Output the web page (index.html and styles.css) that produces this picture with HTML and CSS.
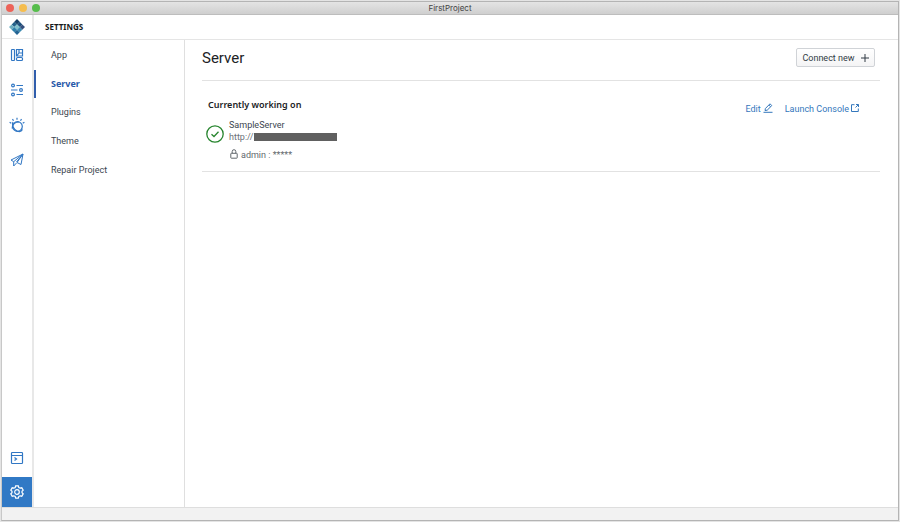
FILE: index.html
```html
<!DOCTYPE html>
<html lang="en">
<head>
<meta charset="utf-8">
<title>FirstProject</title>
<link rel="stylesheet" href="styles.css">
</head>
<body>
<div class="window">
  <header class="titlebar">
    <div class="lights">
      <button class="light close" aria-label="Close"></button>
      <button class="light minimize" aria-label="Minimize"></button>
      <button class="light maximize" aria-label="Maximize"></button>
    </div>
    <span class="window-title">FirstProject</span>
  </header>
  <div class="workspace">
    <nav class="rail" aria-label="Tools">
      <a class="logo" href="#" aria-label="Home">
        <svg width="16" height="16" viewBox="0 0 16 16">
          <path fill="#153f66" d="M8 0l2.7 2.7L8 5.4 5.3 2.7z"/>
          <path fill="#23618a" d="M5.3 2.7L8 5.4 5.3 8 2.7 5.4z"/>
          <path fill="#1d4f7c" d="M10.7 2.7l2.6 2.7L10.7 8 8 5.4z"/>
          <path fill="#6caec1" d="M2.7 5.4L5.3 8l-2.6 2.7L0 8z"/>
          <path fill="#80c2ce" d="M8 5.4L10.7 8 8 10.7 5.3 8z"/>
          <path fill="#344f7c" d="M13.3 5.4L16 8l-2.7 2.7L10.7 8z"/>
          <path fill="#2d7faa" d="M5.3 8L8 10.7l-2.7 2.6-2.6-2.6z"/>
          <path fill="#3c8ab0" d="M10.7 8l2.6 2.7-2.6 2.6L8 10.7z"/>
          <path fill="#236493" d="M8 10.7l2.7 2.6L8 16l-2.7-2.7z"/>
        </svg>
      </a>
      <a class="tool" href="#" aria-label="Views">
        <svg width="14" height="14" viewBox="0 0 14 14">
          <rect x="1.5" y="1.5" width="3" height="11" rx=".7"/>
          <path d="M9 1.500H6.500V8h6V1.500H9v3.500h3.500M9 5L7 7.500"/>
          <rect x="6.5" y="9.5" width="6" height="3" rx="1"/>
        </svg>
      </a>
      <a class="tool" href="#" aria-label="Data">
        <svg width="14" height="14" viewBox="0 0 14 14">
          <circle cx="3" cy="2.5" r="1.4"/><circle cx="11" cy="7" r="1.4"/><circle cx="3" cy="11.5" r="1.4"/>
          <path d="M6.5 2.5H13M1 7h6.5M6.5 11.5H13"/>
        </svg>
      </a>
      <a class="tool" href="#" aria-label="Watson">
        <svg width="16" height="16" viewBox="0 0 16 16">
          <circle cx="8.500" cy="9.500" r="4.800"/>
          <path d="M4 5c-1.300 3 .3 7 4 9 2.300 1 4.500.3 5.500-1.500M3.200 11.500c.3-4 3.300-6.500 6.800-6.500M8 .7v2M3.500 2l1 1.700M12.500 2l-1 1.700M.6 5.200l1.700 1M15.400 5.200l-1.700 1"/>
        </svg>
      </a>
      <a class="tool" href="#" aria-label="Publish">
        <svg class="fine" width="14" height="14" viewBox="0 0 14 14">
          <path d="M13 1L1 7l2.700 1.700L13 1l-2 10.500-4-2zM3.700 8.700V13L6.500 10M13 1L6.500 9"/>
        </svg>
      </a>
      <a class="tool console" href="#" aria-label="Console">
        <svg width="14" height="14" viewBox="0 0 14 14">
          <rect x="1.500" y="1.500" width="11" height="11" rx=".8"/><path d="M1.500 4.500h11M4.500 6.500l2 1.500-2 1.500"/>
        </svg>
      </a>
      <a class="tool current" href="#" aria-label="Settings">
        <svg width="16" height="16" viewBox="0 0 16 16">
          <path d="M6.700 1.800h2.600l.5 1.700 1.300.7 1.700-.4 1.400 2.300-1.200 1.200v1.400l1.200 1.200-1.400 2.300-1.700-.4-1.300.7-.5 1.700H6.700l-.5-1.700-1.300-.7-1.700.4-1.400-2.300L3 8.700V7.300L1.800 6.100l1.400-2.300 1.700.4 1.300-.7z"/>
          <circle cx="8" cy="8" r="2.300"/>
        </svg>
      </a>
    </nav>
    <div class="page">
      <div class="page-header">SETTINGS</div>
      <div class="page-body">
        <nav class="menu" aria-label="Settings">
          <div class="menu-items">
            <a href="#">App</a>
            <a href="#" class="selected">Server</a>
            <a href="#">Plugins</a>
            <a href="#">Theme</a>
            <a href="#">Repair Project</a>
          </div>
        </nav>
        <main class="content">
          <div class="heading">
            <h1>Server</h1>
            <button class="connect">Connect new
              <svg width="8" height="8" viewBox="0 0 8 8"><path d="M4 0v8M0 4h8"/></svg>
            </button>
          </div>
          <section class="server">
            <div class="server-info">
              <h2>Currently working on</h2>
              <div class="details">
                <svg class="check" width="18" height="18" viewBox="0 0 18 18"><circle cx="9" cy="9" r="8.200"/><path d="M5.500 9.200L8 11.500l4.500-4.700"/></svg>
                <div>
                  <div class="name">SampleServer</div>
                  <div class="url">http://<span class="redacted"></span></div>
                  <div class="login">
                    <svg width="8" height="10" viewBox="0 0 8 10"><rect x=".8" y="4.300" width="6.400" height="4.900" rx=".5"/><path d="M2.200 4.300V2.500a1.800 1.800 0 0 1 3.600 0v1.800"/></svg>
                    <span>admin : *****</span>
                  </div>
                </div>
              </div>
            </div>
            <div class="actions">
              <a href="#">Edit
                <svg width="10" height="10" viewBox="0 0 10 10"><path d="M2 7.500l.4-2L7 .8 8.800 2.600 4.200 7.200zM5.800 2l1.800 1.800M.5 9.300h9"/></svg>
              </a>
              <a href="#">Launch Console
                <svg width="8" height="10" viewBox="0 0 8 10"><path d="M3.500 1.700h-3v6.800h6.800V5.500M5 1.500h2.500V4M7.300 1.700L4.500 4.500"/></svg>
              </a>
            </div>
          </section>
        </main>
      </div>
    </div>
  </div>
  <footer class="statusbar"></footer>
</div>
</body>
</html>
```
FILE: styles.css
```css
* { box-sizing: border-box; }
body {
  margin: 0;
  padding: 1px;
  background: #e4e4e4;
  color: #3c4650;
  font: 9px/12px Roboto, "Noto Sans", sans-serif;
}
a { color: inherit; text-decoration: none; }
button { font: inherit; padding: 0; }
svg { display: block; fill: none; stroke: currentColor; flex: none; }
h1, h2 { margin: 0; }
.window {
  display: flex;
  flex-direction: column;
  min-height: calc(100vh - 2px);
  border: 1px solid #b4b4b4;
  border-left-color: #c8c8c8;
  background: #fff;
}
.titlebar {
  display: grid;
  grid-template-columns: 1fr auto 1fr;
  align-items: center;
  height: 13px;
  background: linear-gradient(#e4e4e4, #cfcfcf);
  border-bottom: 1px solid #bdbdbd;
}
.lights { display: flex; gap: 5px; padding-left: 4px; }
.light { width: 8px; height: 8px; padding: 0; border: 0; border-radius: 50%; }
.close { background: #ed6359; }
.minimize { background: #f5bd4f; }
.maximize { background: #56bd4c; }
.window-title { font-family: Inter, sans-serif; font-size: 8px; color: #444; }
.workspace { display: flex; flex: 1; }
.rail {
  display: flex;
  flex-direction: column;
  width: 32px;
  border-right: 2px solid #e8e8e8;
  color: #3177c4;
}
.logo {
  display: grid;
  place-items: center;
  height: 24px;
  margin-bottom: 1px;
  border-bottom: 1px solid #e8e8e8;
}
.logo svg { stroke: none; }
.tool { display: grid; place-items: center; height: 30px; margin-bottom: 5px; }
.console { margin-top: auto; margin-bottom: 4px; }
.current { margin-bottom: 0; background: #3179c5; color: #fff; }
.tool svg { stroke-width: 1.2; }
.tool .fine { stroke-width: 1; }
.page { display: flex; flex: 1; flex-direction: column; }
.page-header {
  height: 25px;
  padding: 6px 11px;
  border-bottom: 1px solid #e5e5e5;
  color: #171b20;
  font-family: "Noto Sans", sans-serif;
  font-size: 8px;
  font-weight: 700;
}
.page-body { display: flex; flex: 1; }
.menu { width: 151px; border-right: 1px solid #dfdfdf; }
.menu-items { display: grid; grid-auto-rows: 1fr; height: 144px; padding-top: 1px; }
.menu a {
  display: flex;
  align-items: center;
  padding-left: 15px;
  border-left: 2px solid transparent;
}
.menu .selected {
  border-color: #315eac;
  color: #2859a9;
  font-family: "Noto Sans", sans-serif;
  font-weight: 700;
}
.content { flex: 1; padding: 0 18px 0 17px; }
.heading {
  display: flex;
  align-items: center;
  justify-content: space-between;
  height: 41px;
  padding: 0 5px 5px 0;
  border-bottom: 1px solid #e2e2e2;
}
h1 { color: #202225; font-size: 15px; font-weight: 400; line-height: 20px; }
.connect {
  display: flex;
  align-items: center;
  justify-content: center;
  gap: 6px;
  width: 79px;
  height: 19px;
  border: 1px solid #d0d3d7;
  border-radius: 2px;
  background: linear-gradient(#fff, #f4f4f5);
  color: #303a44;
}
.server {
  display: flex;
  justify-content: space-between;
  padding: 18px 21px 10px 4px;
  border-bottom: 1px solid #e2e2e2;
}
h2 { padding-left: 2px; color: #202225; font: 600 9px/12px "Noto Sans", sans-serif; }
.details { display: flex; gap: 5px; margin-top: 8px; }
.check { margin-top: 6px; color: #27852e; stroke-width: 1.3; }
.url { display: flex; align-items: center; color: #6c7277; }
.redacted { width: 83px; height: 8px; background: #606060; }
.login { display: flex; gap: 3px; padding-left: 1px; margin-top: 6px; color: #62686d; }
.actions { display: flex; gap: 12px; padding-top: 4px; color: #3477bc; }
.actions a { display: flex; gap: 2px; height: 12px; }
.statusbar { height: 13px; border-top: 1px solid #dedede; background: #f2f2f2; }
```
